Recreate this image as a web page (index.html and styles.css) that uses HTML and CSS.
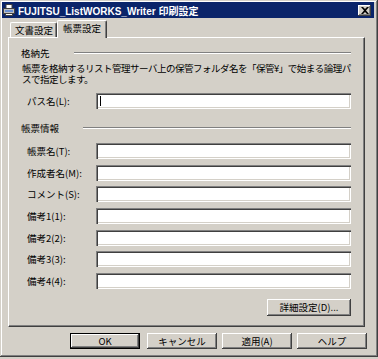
FILE: index.html
```html
<!DOCTYPE html>
<html lang="ja">
<head>
    <meta charset="UTF-8">
    <title>FUJITSU_ListWORKS_Writer 印刷設定</title>
    <link rel="stylesheet" href="styles.css">
</head>
<body>
    <div class="window">
        <div class="titlebar">
            <svg class="title-icon" width="12" height="12" viewBox="0 0 12 12">
                <rect x="3" y="0.5" width="6" height="4" fill="#fff" stroke="#404040"/>
                <rect x="0.5" y="4.5" width="11" height="5" fill="#c0c0c0" stroke="#404040"/>
                <rect x="2" y="6" width="8" height="2" fill="#6a8fd0"/>
                <rect x="2.5" y="9.5" width="7" height="2" fill="#fff" stroke="#404040"/>
            </svg>
            <span class="title-text">FUJITSU_ListWORKS_Writer 印刷設定</span>
            <button class="close-btn">
                <svg width="8" height="7" viewBox="0 0 8 7">
                    <path d="M0 0h2l2 2 2-2h2L5 3.5 8 7H6L4 5 2 7H0l3-3.5z" fill="#000"/>
                </svg>
            </button>
        </div>

        <div class="tabs">
            <div class="tab">文書設定</div>
            <div class="tab active">帳票設定</div>
        </div>

        <div class="panel">
            <div class="group-head"><span>格納先</span></div>
            <p class="desc">帳票を格納するリスト管理サーバ上の保管フォルダ名を「保管¥」で始まる論理パ<br>スで指定します。</p>
            <div class="field path-row">
                <label>パス名(L):</label>
                <input type="text" class="caret">
            </div>

            <div class="group-head second"><span>帳票情報</span></div>
            <div class="form-grid">
                <label>帳票名(T):</label><input type="text">
                <label>作成者名(M):</label><input type="text">
                <label>コメント(S):</label><input type="text">
                <label>備考1(1):</label><input type="text">
                <label>備考2(2):</label><input type="text">
                <label>備考3(3):</label><input type="text">
                <label>備考4(4):</label><input type="text">
            </div>

            <div class="detail-row">
                <button class="btn detail">詳細設定(D)...</button>
            </div>
        </div>

        <div class="actions">
            <button class="btn default">OK</button>
            <button class="btn">キャンセル</button>
            <button class="btn">適用(A)</button>
            <button class="btn">ヘルプ</button>
        </div>
    </div>
</body>
</html>
```

FILE: styles.css
```css
body {
    margin: 0;
    background-color: #d4d0c8;
    font-family: "Noto Sans CJK JP", "Liberation Sans", sans-serif;
    font-size: 9.5px;
    color: #000;
}
.window {
    width: 378px;
    height: 357px;
    box-sizing: border-box;
    padding: 2px 4px 2px 2px;
    background-color: #d4d0c8;
    box-shadow: inset -1px -1px #404040, inset 1px 1px #d4d0c8,
                inset -2px -2px #808080, inset 2px 2px #fff;
}
.titlebar {
    height: 16px;
    background-color: #0a246a;
    display: flex;
    align-items: center;
    padding: 0 3px 0 1px;
}
.title-icon {
    margin-right: 3px;
    flex: none;
}
.title-text {
    color: #fff;
    font-weight: bold;
    font-size: 10px;
    font-family: "Liberation Sans", "Noto Sans CJK JP", sans-serif;
    flex: 1;
    white-space: nowrap;
}
.close-btn {
    width: 13px;
    height: 11px;
    padding: 0;
    border: none;
    background-color: #d4d0c8;
    display: flex;
    align-items: center;
    justify-content: center;
    box-shadow: inset -1px -1px #404040, inset 1px 1px #fff, inset -2px -2px #808080;
}

/* タブ */
.tabs {
    display: flex;
    align-items: flex-end;
    height: 19px;
    margin: 0 0 0 8px;
    position: relative;
    z-index: 1;
}
.tab {
    height: 14px;
    line-height: 14px;
    padding: 0 3px 0 4px;
    border-left: 1px solid #fff;
    border-top: 1px solid #fff;
    border-right: 1px solid #404040;
    border-radius: 2px 2px 0 0;
    box-shadow: inset -1px 0 #808080;
}
.tab.active {
    height: 17px;
    line-height: 15px;
    padding: 0 5px 0 5px;
    margin-bottom: -1px;
    background-color: #d4d0c8;
}

/* パネル */
.panel {
    margin-left: 6px;
    width: 357px;
    height: 290px;
    box-sizing: border-box;
    padding: 9px 13px 0 12px;
    border-top: 1px solid #fff;
    border-left: 1px solid #fff;
    border-right: 1px solid #404040;
    border-bottom: 1px solid #404040;
    box-shadow: inset -1px -1px #808080;
}
.group-head {
    display: flex;
    align-items: center;
    height: 12px;
    line-height: 12px;
}
.group-head::after {
    content: "";
    flex: 1;
    margin-left: 24px;
    border-top: 1px solid #808080;
    border-bottom: 1px solid #fff;
}
.group-head.second {
    margin-top: 13px;
}
.desc {
    margin: 4px 0 0 1px;
    line-height: 11px;
    letter-spacing: -0.5px;
    white-space: nowrap;
}
.field {
    display: grid;
    grid-template-columns: 69px 1fr;
    align-items: center;
    padding-left: 6px;
}
.path-row {
    margin-top: 8px;
}
.form-grid {
    display: grid;
    grid-template-columns: 69px 1fr;
    align-items: center;
    row-gap: 5.67px;
    padding-left: 6px;
    margin-top: 9px;
}
label {
    line-height: 12px;
}
input {
    height: 16px;
    box-sizing: border-box;
    margin: 0;
    padding: 0 3px;
    border: none;
    background-color: #fff;
    box-shadow: inset 1px 1px #808080, inset 2px 2px #404040,
                inset -1px -1px #fff, inset -2px -2px #d4d0c8;
    font: inherit;
}
.caret {
    background-image: linear-gradient(#000, #000);
    background-size: 1px 10px;
    background-position: 4px 3px;
    background-repeat: no-repeat;
}
.detail-row {
    display: flex;
    justify-content: flex-end;
    margin-top: 10px;
}

/* ボタン */
.btn {
    height: 16px;
    width: 70px;
    padding: 0;
    border: none;
    background-color: #d4d0c8;
    font: inherit;
    line-height: 14px;
    color: #000;
    box-shadow: inset -1px -1px #404040, inset 1px 1px #fff, inset -2px -2px #808080;
}
.btn.detail {
    width: 84px;
    height: 17px;
}
.btn.default {
    box-shadow: inset 0 0 0 1px #000, inset -2px -2px #404040, inset 2px 2px #fff, inset -3px -3px #808080;
    margin-right: 2px;
}
.actions {
    display: flex;
    justify-content: flex-end;
    gap: 5px;
    margin-top: 6px;
    padding-right: 7px;
}
```
